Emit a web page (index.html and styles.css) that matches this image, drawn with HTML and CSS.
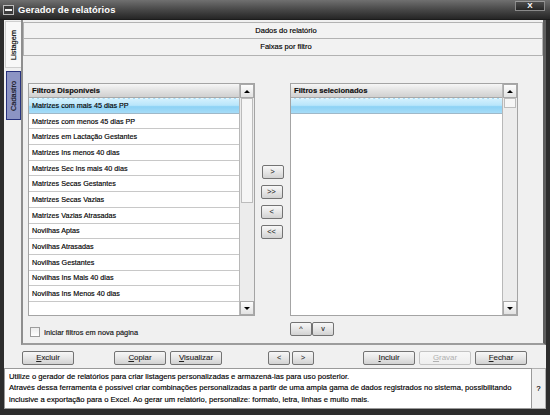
FILE: index.html
```html
<!DOCTYPE html>
<html lang="pt">
<head>
<meta charset="utf-8">
<title>Gerador de relatórios</title>
<link rel="stylesheet" href="styles.css">
</head>
<body>
<div class="window">
  <div class="titlebar">
    <span class="sysicon"><span class="bar"></span></span>
    <span class="title">Gerador de relatórios</span>
    <span class="close">X</span>
  </div>
  <div class="frame">
    <div class="main">
      <div class="sidetabs">
        <div class="tab tab-list"><span class="vtext">Listagem</span></div>
        <div class="tab tab-cad"><span class="vtext">Cadastro</span></div>
      </div>
      <div class="content">
        <div class="hdr">Dados do relatório</div>
        <div class="hdr">Faixas por filtro</div>
        <div class="panel">
          <div class="listbox list-left">
            <div class="items">
              <div class="lhead">Filtros Disponíveis</div>
              <div class="row sel">Matrizes com mais 45 dias PP</div>
              <div class="row">Matrizes com menos 45 dias PP</div>
              <div class="row">Matrizes em Lactação Gestantes</div>
              <div class="row">Matrizes Ins menos 40 dias</div>
              <div class="row">Matrizes Sec Ins mais 40 dias</div>
              <div class="row">Matrizes Secas Gestantes</div>
              <div class="row">Matrizes Secas Vazias</div>
              <div class="row">Matrizes Vazias Atrasadas</div>
              <div class="row">Novilhas Aptas</div>
              <div class="row">Novilhas Atrasadas</div>
              <div class="row">Novilhas Gestantes</div>
              <div class="row">Novilhas Ins Mais 40 dias</div>
              <div class="row">Novilhas Ins Menos 40 dias</div>
            </div>
            <div class="sb">
              <div class="sbbtn"><span class="arr-up"></span></div>
              <div class="track"><div class="thumb thumb-big"></div></div>
              <div class="sbbtn"><span class="arr-down"></span></div>
            </div>
          </div>
          <div class="movebtns">
            <button class="btn small">&gt;</button>
            <button class="btn small">&gt;&gt;</button>
            <button class="btn small">&lt;</button>
            <button class="btn small">&lt;&lt;</button>
          </div>
          <div class="listbox list-right">
            <div class="items">
              <div class="lhead">Filtros selecionados</div>
              <div class="row sel"></div>
            </div>
            <div class="sb">
              <div class="sbbtn"><span class="arr-up"></span></div>
              <div class="track"><div class="thumb thumb-small"></div></div>
              <div class="sbbtn"><span class="arr-down"></span></div>
            </div>
          </div>
          <label class="check"><span class="box"></span>Iniciar filtros em nova página</label>
          <div></div>
          <div class="updown">
            <button class="btn small">^</button>
            <button class="btn small">v</button>
          </div>
        </div>
      </div>
    </div>
    <div class="buttonbar">
      <button class="btn wide b-excluir"><u>E</u>xcluir</button>
      <button class="btn wide b-copiar"><u>C</u>opiar</button>
      <button class="btn wide"><u>V</u>isualizar</button>
      <button class="btn small b-prev">&lt;</button>
      <button class="btn small">&gt;</button>
      <button class="btn wide b-incluir"><u>I</u>ncluir</button>
      <button class="btn wide disabled"><u>G</u>ravar</button>
      <button class="btn wide"><u>F</u>echar</button>
    </div>
    <div class="descrow">
      <div class="desc">
        <p>Utilize o gerador de relatórios para criar listagens personalizadas e armazená-las para uso posterior.</p>
        <p>Através dessa ferramenta é possível criar combinações personalizadas a partir de uma ampla gama de dados registrados no sistema, possibilitando</p>
        <p>inclusive a exportação para o Excel. Ao gerar um relatório, personalize: formato, letra, linhas e muito mais.</p>
      </div>
      <div class="help">?</div>
    </div>
  </div>
</div>
</body>
</html>
```
FILE: styles.css
```css
* { box-sizing: border-box; }
html, body { margin: 0; padding: 0; }
body {
  width: 550px;
  height: 415px;
  overflow: hidden;
  background: #2b2b2b;
  font-family: "Liberation Sans", Arial, sans-serif;
  font-size: 7.2px;
  color: #000;
  -webkit-text-stroke: 0.15px #000;
}
.window {
  width: 550px;
  height: 415px;
  display: flex;
  flex-direction: column;
  background: #2d2d2d;
}
.titlebar {
  height: 20px;
  display: flex;
  align-items: flex-start;
  background: linear-gradient(#707070, #4c4c4c 45%, #333333 80%, #262626);
  border-bottom: 1px solid #1c1c1c;
}
.sysicon {
  width: 11px;
  height: 10px;
  margin: 5px 0 0 3px;
  border: 1px solid #bdbdbd;
  background: #3c3c3c;
  display: flex;
  align-items: center;
  justify-content: center;
}
.sysicon .bar {
  width: 7px;
  height: 2px;
  background: #f4f4f4;
}
.title {
  margin: 3px 0 0 4px;
  color: #ffffff;
  -webkit-text-stroke: 0;
  font-weight: bold;
  font-size: 9.4px;
  line-height: 13px;
  letter-spacing: 0.1px;
}
.close {
  margin: 1px 5px 0 auto;
  width: 30px;
  height: 10px;
  border: 1px solid #8a8a8a;
  border-top-color: #9a9a9a;
  background: linear-gradient(#4c4c4c, #262626);
  color: #ffffff;
  -webkit-text-stroke: 0;
  font-weight: bold;
  font-size: 8px;
  line-height: 8px;
  text-align: center;
}
.frame {
  flex: 1;
  display: flex;
  flex-direction: column;
  padding: 0 4px 6px 4px;
}
.main {
  height: 325px;
  display: flex;
  background: #f0f0f0;
}
.sidetabs {
  width: 17px;
  padding-top: 1px;
  display: flex;
  flex-direction: column;
  gap: 3px;
}
.tab {
  display: flex;
  align-items: center;
  justify-content: center;
}
.tab-list {
  margin-left: 1px;
  width: 16px;
  height: 47px;
  background: #f8f8f8;
  border: 1px solid #cfcfcf;
  border-right: none;
}
.tab-cad {
  margin-left: 2px;
  width: 15px;
  height: 49px;
  background: #8c94c4;
  border: 1px solid #28327e;
  color: #1a1a2a;
}
.vtext {
  writing-mode: vertical-rl;
  transform: rotate(180deg);
  white-space: nowrap;
  font-size: 7.4px;
}
.content {
  flex: 1;
  display: flex;
  flex-direction: column;
  padding-top: 2px;
  border-left: 2px solid #8e8e8e;
  border-right: 3px solid #5e5e5e;
  border-bottom: 2px solid #9c9c9c;
}
.hdr {
  height: 17px;
  background: #f2f2f2;
  border: 1px solid #b2b2b2;
  border-top: none;
  text-align: center;
  line-height: 16px;
  padding-left: 6px;
  font-size: 7.5px;
}
.hdr:first-child { border-top: 1px solid #b2b2b2; }
.panel {
  flex: 1;
  display: grid;
  grid-template-columns: 227px 35px 228px;
  grid-template-rows: 233px auto;
  padding: 27px 0 0 5px;
}
.listbox {
  display: flex;
  height: 233px;
  border: 1px solid #a4a4a4;
  background: #ffffff;
}
.items {
  flex: 1;
  display: flex;
  flex-direction: column;
}
.lhead {
  height: 14px;
  flex: none;
  padding-left: 3px;
  font-weight: bold;
  font-size: 7.6px;
  line-height: 13px;
  color: #111;
  background: linear-gradient(#f6f6f6, #e2e2e2 50%, #d0d0d0);
  border-bottom: 1px solid #a8a8a8;
}
.row {
  height: 15.7px;
  flex: none;
  padding-left: 3px;
  display: flex;
  align-items: center;
  border-bottom: 1px solid #c8c8c8;
  white-space: nowrap;
}
.row.sel {
  border-top: 1px dashed #e8f8ff;
  background: linear-gradient(#d3f0fd, #b9e6fb 45%, #8dd2f5 55%, #a6dcf7);
  border-bottom: 1px solid #9fb8c8;
}
.sb {
  width: 15px;
  flex: none;
  display: flex;
  flex-direction: column;
  background: #ececec;
  border-left: 1px solid #b8b8b8;
}
.sbbtn {
  height: 14px;
  flex: none;
  border: 1px solid #a9a9a9;
  background: linear-gradient(#fdfdfd, #e2e2e2);
  display: flex;
  align-items: center;
  justify-content: center;
}
.arr-up, .arr-down {
  width: 0;
  height: 0;
  border-left: 3px solid transparent;
  border-right: 3px solid transparent;
}
.arr-up { border-bottom: 3px solid #000; }
.arr-down { border-top: 3px solid #000; }
.track {
  flex: 1;
  padding: 0 1px;
}
.thumb {
  border: 1px solid #bcbcbc;
  background: #f6f6f6;
}
.thumb-big { height: 105px; }
.thumb-small { height: 10px; }
.movebtns {
  display: flex;
  flex-direction: column;
  align-items: center;
  padding-top: 82px;
  gap: 6px;
}
.btn {
  height: 14px;
  padding: 0;
  margin: 0;
  font-family: "Liberation Sans", Arial, sans-serif;
  font-size: 7.2px;
  color: #222;
  -webkit-text-stroke: 0.1px #222;
  border: 1px solid #737373;
  border-radius: 2px;
  background: linear-gradient(#f7f7f7, #e6e6e6 50%, #d2d2d2);
  line-height: 12px;
  text-align: center;
}
.btn u { text-decoration: underline; }
.btn.small { width: 22px; }
.btn.wide { width: 52px; font-size: 7.9px; }
.btn.disabled {
  color: #b0b0b0;
  -webkit-text-stroke: 0;
  border-color: #c4c4c4;
  background: linear-gradient(#f8f8f8, #eeeeee);
}
.check {
  display: flex;
  align-items: center;
  gap: 4px;
  padding: 10px 0 0 2px;
  height: 22px;
  color: #222;
  font-size: 7.4px;
}
.check .box {
  width: 10px;
  height: 10px;
  border: 1px solid #9c9c9c;
  background: linear-gradient(#ececec, #ffffff);
}
.updown {
  display: flex;
  gap: 2px;
  padding-top: 6px;
}
.buttonbar {
  height: 22px;
  display: flex;
  align-items: center;
  padding: 3px 0 0 18px;
  background: #f0f0f0;
  gap: 4px;
}
.b-copiar { margin-left: 36px; }
.b-prev { margin-left: 42px; }
.btn.small + .btn.small { margin-left: -2px; }
.b-incluir { margin-left: 45px; }
.descrow {
  flex: 1;
  display: flex;
  background: #f0f0f0;
  padding-top: 1px;
}
.desc {
  flex: 1;
  background: #ffffff;
  border: 1px solid #9a9a9a;
  padding: 2px 4px;
  color: #000;
  font-size: 7.65px;
}
.desc p {
  margin: 0;
  line-height: 11.3px;
  white-space: nowrap;
}
.help {
  width: 14px;
  border: 1px solid #b0b0b0;
  border-left: none;
  background: #f0f0f0;
  display: flex;
  align-items: center;
  justify-content: center;
}
```
